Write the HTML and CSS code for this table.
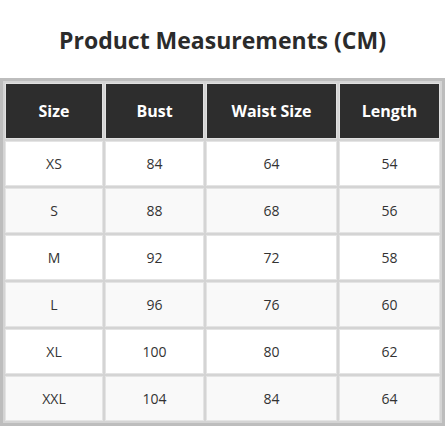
FILE: index.html
```html
<!DOCTYPE html>
<html>
<head>
<meta charset="utf-8">
<link rel="stylesheet" href="styles.css">
</head>
<body>
<h2 class="title">Product Measurements (CM)</h2>
<table class="sizes">
  <colgroup>
    <col class="c1"><col class="c2"><col class="c3"><col class="c4">
  </colgroup>
  <thead>
    <tr><th>Size</th><th>Bust</th><th>Waist Size</th><th>Length</th></tr>
  </thead>
  <tbody>
    <tr><td>XS</td><td>84</td><td>64</td><td>54</td></tr>
    <tr><td>S</td><td>88</td><td>68</td><td>56</td></tr>
    <tr><td>M</td><td>92</td><td>72</td><td>58</td></tr>
    <tr><td>L</td><td>96</td><td>76</td><td>60</td></tr>
    <tr><td>XL</td><td>100</td><td>80</td><td>62</td></tr>
    <tr><td>XXL</td><td>104</td><td>84</td><td>64</td></tr>
  </tbody>
</table>
</body>
</html>
```
FILE: styles.css
```css
html, body {
  margin: 0;
  padding: 0;
  background: #fff;
  font-family: "Open Sans", "Noto Sans", sans-serif;
  color: #333;
}
.title {
  margin: 25px 0 22px;
  font-size: 23px;
  line-height: 31px;
  font-weight: 700;
  text-align: center;
  color: #2b2b2b;
}
.sizes {
  width: 445px;
  table-layout: fixed;
  border: 3px solid #bdbdbd;
  border-spacing: 2px;
  background: #d4d4d4;
}
.c1 { width: 98px; }
.c2 { width: 99px; }
.c3 { width: 131px; }
.c4 { width: 101px; }
.sizes th {
  background: #2d2d2d;
  color: #fff;
  font-size: 16px;
  font-weight: 700;
  line-height: 22px;
  padding: 16px 4px;
  border: 1px solid #e0e0e0;
  text-align: center;
}
.sizes td {
  background: #fff;
  font-size: 14px;
  line-height: 19px;
  padding: 12px 4px;
  border: 1px solid #e4e4e4;
  text-align: center;
  color: #333;
}
.sizes tbody tr:nth-child(even) td {
  background: #f9f9f9;
}
```
